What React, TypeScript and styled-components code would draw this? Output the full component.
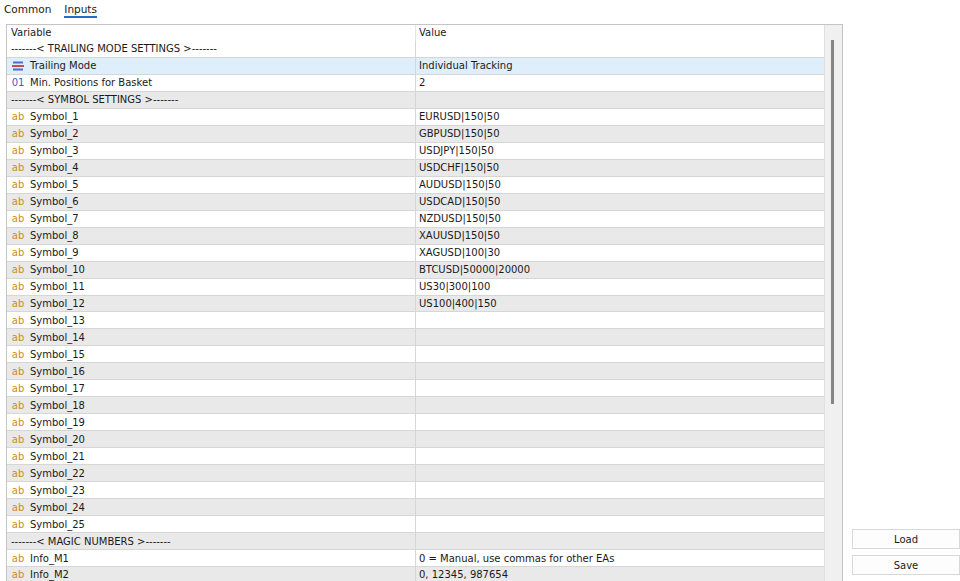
import React from "react";
import styled, { createGlobalStyle } from "styled-components";

const Global = createGlobalStyle`
  html, body { margin: 0; padding: 0; background: #fff; overflow: hidden; }
  body { font-family: "DejaVu Sans", Verdana, sans-serif; font-size: 10px; color: #1a1a1a; }
`;

const Page = styled.div`
  width: 960px;
  height: 581px;
  display: flex;
  flex-direction: column;
  overflow: hidden;
`;

const Tabs = styled.div`
  display: flex;
  gap: 13px;
  padding: 2px 0 0 4px;
  height: 24px;
  box-sizing: border-box;
`;

const Tab = styled.div<{ $active?: boolean }>`
  font-size: 10.5px;
  height: 14px;
  line-height: 14px;
  border-bottom: 2px solid ${(p) => (p.$active ? "#1f6fd0" : "transparent")};
`;

const Body = styled.div`
  display: flex;
  flex: 1;
  padding-left: 6px;
  min-height: 0;
  align-items: flex-start;
`;

const Grid = styled.div`
  width: 837px;
  height: 560px;
  border: 1px solid #c4c4c4;
  border-bottom: none;
  display: flex;
  overflow: hidden;
  box-sizing: border-box;
`;

const Table = styled.div`
  flex: 1;
  display: flex;
  flex-direction: column;
`;

const Row = styled.div<{ $bg: string }>`
  display: grid;
  grid-template-columns: 409px 1fr;
  height: 17px;
  background: ${(p) => p.$bg};
  border-bottom: 1px solid #d6d6d6;
  box-sizing: border-box;
`;

const HeadRow = styled(Row)`
  height: 16px;
  border-bottom: none;
`;

const Cell = styled.div`
  display: flex;
  align-items: center;
  padding-left: 4px;
  white-space: nowrap;
  overflow: hidden;
  font-size: 10px;
`;

const NameCell = styled(Cell)`
  border-right: 1px solid #d6d6d6;
  gap: 5px;
`;

const ValueCell = styled(Cell)`
  padding-left: 3px;
`;

const Icon = styled.span<{ $color: string }>`
  width: 14px;
  display: inline-flex;
  justify-content: center;
  color: ${(p) => p.$color};
  font-size: 10px;
`;

const Scroll = styled.div`
  width: 17px;
  background: #f0f0f0;
  border-left: 1px solid #e0e0e0;
  position: relative;
`;

const Thumb = styled.div`
  position: absolute;
  left: 6px;
  top: 15px;
  width: 3px;
  height: 364px;
  background: #858585;
`;

const Side = styled.div`
  flex: 1;
  align-self: stretch;
  display: flex;
  flex-direction: column;
  justify-content: flex-end;
  align-items: flex-end;
  gap: 6px;
  padding-bottom: 6px;
`;

const Button = styled.div`
  width: 108px;
  height: 20px;
  border: 1px solid #d8d8d8;
  background: #fdfdfd;
  display: flex;
  align-items: center;
  justify-content: center;
  font-size: 10px;
  box-sizing: border-box;
`;

const EnumIcon = () => (
  <svg width="12" height="10" viewBox="0 0 12 10">
    <rect x="1" y="0.5" width="10" height="2" fill="#4a6fd0" />
    <rect x="0" y="4" width="12" height="2" fill="#d04848" />
    <rect x="1" y="7.5" width="10" height="2" fill="#4a6fd0" />
  </svg>
);

type R = { name: string; value?: string; kind?: "ab" | "enum" | "int" | "sep" };

const symbols = [
  "EURUSD|150|50", "GBPUSD|150|50", "USDJPY|150|50", "USDCHF|150|50", "AUDUSD|150|50",
  "USDCAD|150|50", "NZDUSD|150|50", "XAUUSD|150|50", "XAGUSD|100|30", "BTCUSD|50000|20000",
  "US30|300|100", "US100|400|150",
];

const rows: R[] = [
  { name: "-------< TRAILING MODE SETTINGS >-------", kind: "sep" },
  { name: "Trailing Mode", value: "Individual Tracking", kind: "enum" },
  { name: "Min. Positions for Basket", value: "2", kind: "int" },
  { name: "-------< SYMBOL SETTINGS >-------", kind: "sep" },
  ...Array.from({ length: 25 }, (_, i) => ({ name: `Symbol_${i + 1}`, value: symbols[i] ?? "", kind: "ab" as const })),
  { name: "-------< MAGIC NUMBERS >-------", kind: "sep" },
  { name: "Info_M1", value: "0 = Manual, use commas for other EAs", kind: "ab" },
  { name: "Info_M2", value: "0, 12345, 987654", kind: "ab" },
];

const renderIcon = (k?: string) => {
  if (k === "ab") return <Icon $color="#c8901c">ab</Icon>;
  if (k === "int") return <Icon $color="#3a64c0">01</Icon>;
  if (k === "enum") return <Icon $color="#000"><EnumIcon /></Icon>;
  return null;
};

export default function App() {
  return (
    <Page>
      <Global />
      <Tabs>
        <Tab>Common</Tab>
        <Tab $active>Inputs</Tab>
      </Tabs>
      <Body>
        <Grid>
          <Table>
            <HeadRow $bg="#fff">
              <NameCell style={{ borderRight: "1px solid #e4e4e4" }}>Variable</NameCell>
              <ValueCell>Value</ValueCell>
            </HeadRow>
            {rows.map((r, i) => (
              <Row key={i} $bg={i === 1 ? "#deeefb" : i % 2 ? "#e9e9e9" : "#fff"}>
                <NameCell>
                  {renderIcon(r.kind)}
                  {r.name}
                </NameCell>
                <ValueCell>{r.value}</ValueCell>
              </Row>
            ))}
          </Table>
          <Scroll>
            <Thumb />
          </Scroll>
        </Grid>
        <Side>
          <Button>Load</Button>
          <Button>Save</Button>
        </Side>
      </Body>
    </Page>
  );
}
